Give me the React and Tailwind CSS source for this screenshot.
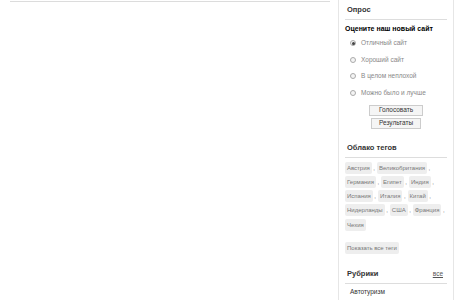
export default function App() {
  const options = ["Отличный сайт", "Хороший сайт", "В целом неплохой", "Можно было и лучше"];
  const tagRows = [
    ["Австрия", "Великобритания"],
    ["Германия", "Египет", "Индия"],
    ["Испания", "Италия", "Китай"],
    ["Нидерланды", "США", "Франция"],
    ["Чехия"],
  ];

  return (
    <div
      className="flex w-[470px] h-[300px] overflow-hidden bg-white"
      style={{ fontFamily: '"Liberation Sans", Arial, sans-serif' }}
    >
      {/* Main content */}
      <main className="w-[338px] shrink-0 pl-[10px] pr-[8px] pt-[1px]">
        <div className="h-px bg-[#dcdcdc]" />
      </main>

      {/* Sidebar */}
      <aside className="w-[116px] shrink-0 border-x border-[#e6e6e6] px-[6px] pt-[5px]">
        {/* Poll */}
        <h3 className="text-[7.5px] font-bold text-[#333] pl-[2px] leading-[10px]">Опрос</h3>
        <div className="mt-[4px] h-px bg-[#ddd]" />
        <p className="mt-[4px] text-[7px] font-bold text-black leading-[10px]">Оцените наш новый сайт</p>
        <div className="mt-[4px] flex flex-col gap-[6.5px] pl-[5px]">
          {options.map((o, i) => (
            <label key={o} className="flex items-center gap-[5px] text-[6.5px] text-[#888] leading-[10px]">
              <span className="w-[6px] h-[6px] rounded-full border border-[#aaa] bg-[#f4f4f4] flex items-center justify-center">
                {i === 0 && <span className="w-[3px] h-[3px] rounded-full bg-[#444]" />}
              </span>
              {o}
            </label>
          ))}
        </div>
        <div className="mt-[7px] flex flex-col items-center gap-[2px]">
          <button className="h-[11px] px-[9px] border border-[#ccc] bg-[#f5f5f5] text-[6.5px] text-[#333] leading-none">
            Голосовать
          </button>
          <button className="h-[11px] px-[7px] border border-[#ccc] bg-[#f5f5f5] text-[6.5px] text-[#333] leading-none">
            Результаты
          </button>
        </div>

        {/* Tag cloud */}
        <h3 className="mt-[14px] text-[7.5px] font-bold text-[#333] pl-[2px] leading-[10px]">Облако тегов</h3>
        <div className="mt-[4px] h-px bg-[#ddd]" />
        <div className="mt-[4px] flex flex-col gap-[2.3px]">
          {tagRows.map((row, r) => (
            <div key={r} className="flex items-center h-[12px]">
              {row.map((t) => (
                <span key={t} className="flex items-center text-[6px] text-[#777] leading-none">
                  <span className="bg-[#eee] rounded-[2px] px-[2px] py-[3px]">{t}</span>
                  {r !== 4 && <span className="ml-[1.5px] mr-[2px] text-[#555]">,</span>}
                </span>
              ))}
            </div>
          ))}
        </div>
        <div className="mt-[11px] flex">
          <span className="bg-[#eee] rounded-[2px] px-[2px] py-[3px] text-[6px] text-[#777] leading-none">
            Показать все теги
          </span>
        </div>

        {/* Rubrics */}
        <div className="mt-[15px] flex items-center justify-between pl-[2px] pr-[4px]">
          <h3 className="text-[7.5px] font-bold text-[#333] leading-[10px]">Рубрики</h3>
          <a href="#" className="text-[6.5px] text-[#555] underline leading-[10px]">все</a>
        </div>
        <div className="mt-[4px] h-px bg-[#ddd]" />
        <div className="pl-[5px] py-[3px] text-[6.5px] text-[#333] leading-[10px] border-b border-dashed border-[#ccc]">
          Автотуризм
        </div>
      </aside>
    </div>
  );
}
